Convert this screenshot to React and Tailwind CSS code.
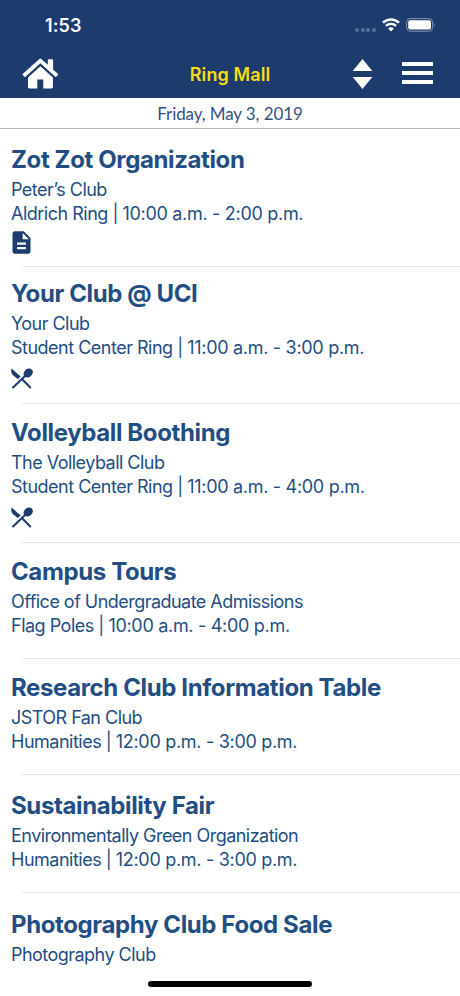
import { MdDescription } from "react-icons/md";

const events = [
  {
    title: "Zot Zot Organization",
    host: "Peter’s Club",
    place: "Aldrich Ring",
    time: "10:00 a.m. - 2:00 p.m.",
    icon: "document",
    row: "h-[138px] pt-[15px]",
  },
  {
    title: "Your Club @ UCI",
    host: "Your Club",
    place: "Student Center Ring",
    time: "11:00 a.m. - 3:00 p.m.",
    icon: "food",
    row: "h-[137px] pt-[11px]",
  },
  {
    title: "Volleyball Boothing",
    host: "The Volleyball Club",
    place: "Student Center Ring",
    time: "11:00 a.m. - 4:00 p.m.",
    icon: "food",
    row: "h-[139px] pt-[13px]",
  },
  {
    title: "Campus Tours",
    host: "Office of Undergraduate Admissions",
    place: "Flag Poles",
    time: "10:00 a.m. - 4:00 p.m.",
    row: "h-[116px] pt-[13px]",
  },
  {
    title: "Research Club Information Table",
    host: "JSTOR Fan Club",
    place: "Humanities",
    time: "12:00 p.m. - 3:00 p.m.",
    row: "h-[116px] pt-[13px]",
  },
  {
    title: "Sustainability Fair",
    host: "Environmentally Green Organization",
    place: "Humanities",
    time: "12:00 p.m. - 3:00 p.m.",
    row: "h-[118px] pt-[15px]",
  },
  {
    title: "Photography Club Food Sale",
    host: "Photography Club",
    row: "pt-[16px]",
    last: true,
  },
];

function StatusBar() {
  return (
    <div className="flex h-[50px] items-center justify-between pl-[45px] pr-[24px] text-white">
      <span className="text-[18px] font-semibold tracking-[0.1px]">1:53</span>
      <div className="flex items-center">
        <div className="mt-[9px] mr-[6px] flex gap-[1.6px]">
          <span className="size-[4px] rounded-full bg-[#56709a]" />
          <span className="size-[4px] rounded-full bg-[#56709a]" />
          <span className="size-[4px] rounded-full bg-[#56709a]" />
          <span className="size-[4px] rounded-full bg-[#56709a]" />
        </div>
        <svg width="18" height="14" viewBox="0 0 18 14" fill="none" stroke="white">
          <path d="M1 4.6a11.6 11.6 0 0 1 16 0" strokeWidth="2.5" />
          <path d="M4 7.9a7.3 7.3 0 0 1 10 0" strokeWidth="2.4" />
          <path d="M9 13.6 6.1 10.6a4.2 4.2 0 0 1 5.8 0z" fill="white" stroke="none" />
        </svg>
        <svg className="ml-[6px]" width="30" height="14" viewBox="0 0 30 14">
          <rect x="0.6" y="0.6" width="26" height="12.6" rx="3.6" fill="none" stroke="#8496b4" />
          <rect x="2.2" y="2.2" width="22.8" height="9.4" rx="2" fill="white" />
          <path d="M28 4.8q1.6 2.1 0 4.4z" fill="#8496b4" />
        </svg>
      </div>
    </div>
  );
}

function NavBar() {
  return (
    <div className="grid h-[48px] grid-cols-[1fr_auto_1fr] items-center pl-[22px] pr-[27px]">
      <svg width="37" height="32" viewBox="0 0 37 32" fill="white">
        <path d="M17.1 1.2a1.8 1.8 0 0 1 2.5 0L25.8 6.8V2.2q0-.9.9-.9h3.5q.9 0 .9.9v9.4l4.7 4.2q.6.6.1 1.2l-1.4 1.6q-.6.6-1.2.1L18.4 5.2 3.4 18.7q-.6.5-1.2-.1L.8 17q-.5-.6.1-1.2z" />
        <path d="M18.4 8.3 30.9 19.4V29q0 1.4-1.4 1.4h-8.2V21.5h-6v8.9H7.4Q6 30.4 6 29v-9.6z" />
      </svg>
      <h1 className="pl-[5px] pt-px text-[18px] font-semibold leading-6 tracking-[0.1px] text-[#fadd12]">
        Ring Mall
      </h1>
      <div className="flex items-center justify-end gap-[29px]">
        <svg width="21" height="32" viewBox="0 0 21 32" fill="white">
          <path d="M10.5 1 20.3 13H.7z" />
          <path d="M.7 19h19.6L10.5 31z" />
        </svg>
        <div className="mb-[2px] flex w-[31px] flex-col gap-[5px]">
          <span className="h-[4px] bg-white" />
          <span className="h-[4px] bg-white" />
          <span className="h-[4px] bg-white" />
        </div>
      </div>
    </div>
  );
}

function FoodIcon() {
  return (
    <svg className="mt-[8px]" width="22" height="21" viewBox="0 0 22 21" fill="#1d3c6d">
      <path d="M.7.5 8.9 7.9 6.3 10.6 2 7.2Q-.8 4.4.7.5z" />
      <path d="M7.6 6.7 9.6 8.6 6.9 11 5 9.3z" />
      <ellipse cx="17.2" cy="5" rx="5" ry="4" transform="rotate(-38 17.2 5)" />
      <path
        d="M14.6 7.4 2 19.4M11.4 11.5l7.8 7.9"
        stroke="#1d3c6d"
        strokeWidth="2.1"
        strokeLinecap="round"
      />
    </svg>
  );
}

function EventRow({ event }) {
  return (
    <li>
      <div className={event.row + " flex flex-col pl-[11px] text-[#234e83]"}>
        <h2 className="mb-[2px] text-[24px] font-bold leading-8 tracking-[-0.38px]">
          {event.title}
        </h2>
        <p className="text-[18px] leading-6 tracking-[-0.53px]">{event.host}</p>
        {event.place && (
          <p className="text-[18px] leading-6 tracking-[-0.5px]">
            {event.place} | <span className="tracking-[-0.3px]">{event.time}</span>
          </p>
        )}
        {event.icon === "document" && (
          <MdDescription className="-ml-[3px] mt-[3px] size-[27px] text-[#1d3c6d]" />
        )}
        {event.icon === "food" && <FoodIcon />}
      </div>
      {!event.last && <div className="-mt-px ml-[22px] h-px bg-[#e6e6e7]" />}
    </li>
  );
}

export default function App() {
  return (
    <div className="relative flex h-[996px] w-[460px] flex-col overflow-hidden bg-white font-['Inter',sans-serif]">
      <header className="h-[98px] shrink-0 bg-[#1d3c6d]">
        <StatusBar />
        <NavBar />
      </header>

      <div className="flex h-[31px] shrink-0 items-center justify-center border-b border-[#b5b5b8] pt-[2px] font-['Lato',sans-serif] text-[17px] tracking-[-0.1px] text-[#38517f]">
        Friday, May 3, 2019
      </div>

      <ul>
        {events.map((event) => (
          <EventRow key={event.title} event={event} />
        ))}
      </ul>

      {/* Home indicator */}
      <div className="absolute bottom-[9px] left-[148px] h-[6px] w-[164px] rounded-full bg-black" />
    </div>
  );
}
